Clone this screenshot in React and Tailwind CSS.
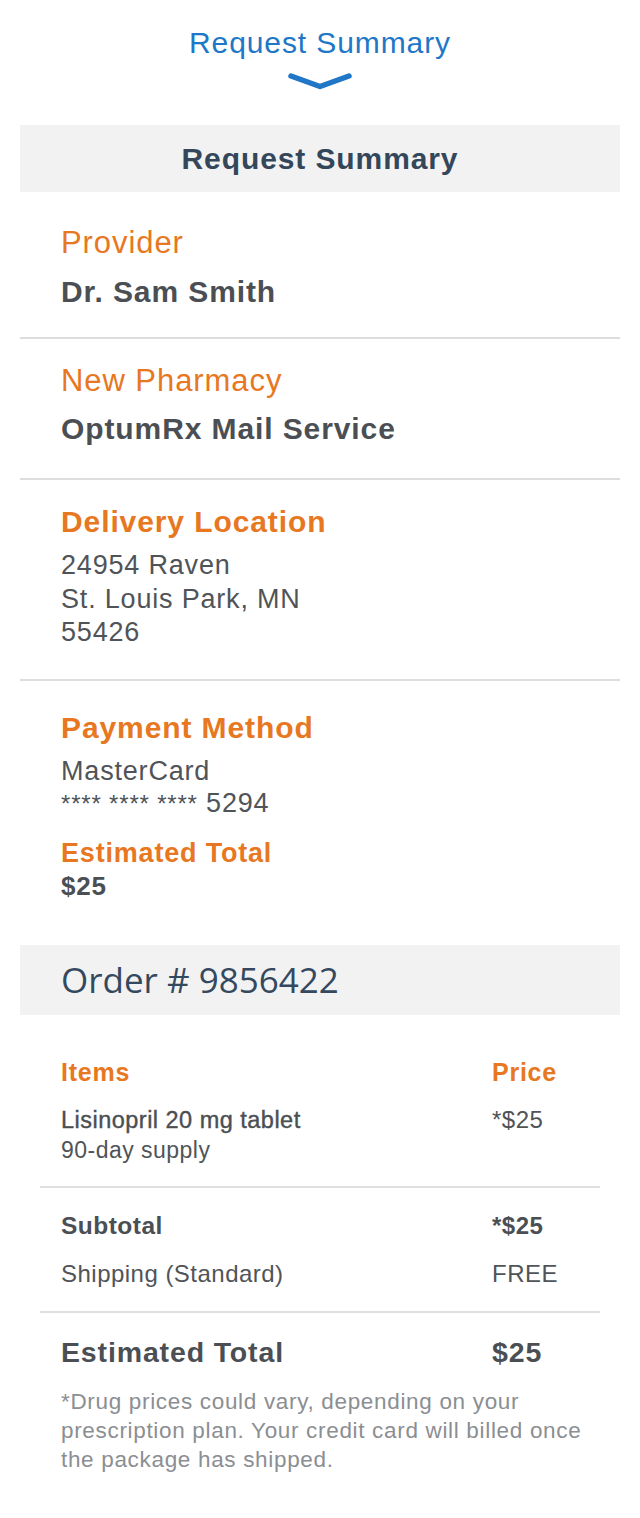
import React from "react";

const font = { fontFamily: '"Liberation Sans", Arial, Helvetica, sans-serif' };

function Label({ children, className = "" }) {
  return <div className={`text-[#e87722] tracking-[0.03em] ${className}`}>{children}</div>;
}

export default function App() {
  return (
    <div className="w-[640px] min-h-[1518px] bg-white" style={font}>
      {/* top toggle */}
      <div className="flex flex-col items-center pt-[25px] pb-[35px]">
        <div className="text-[30px] leading-[36px] tracking-[0.03em] text-[#2077c7]">Request Summary</div>
        <svg className="mt-[11px]" width="66" height="18" viewBox="0 0 66 18" fill="none">
          <polyline points="4,4 33,14.5 62,4" stroke="#2077c7" strokeWidth="5.5" strokeLinecap="round" strokeLinejoin="round" />
        </svg>
      </div>

      {/* summary bar */}
      <div className="mx-[20px] h-[67px] bg-[#f2f2f2] flex items-center justify-center">
        <div className="text-[30px] font-bold tracking-[0.03em] text-[#34475a]">Request Summary</div>
      </div>

      {/* provider */}
      <div className="mx-[20px] pl-[41px] pt-[33px] pb-[27px] border-b-2 border-[#dddddd]">
        <Label className="text-[31px] leading-[36px]">Provider</Label>
        <div className="mt-[13px] text-[30px] leading-[36px] font-bold tracking-[0.03em] text-[#4b4f54]">Dr. Sam Smith</div>
      </div>

      {/* pharmacy */}
      <div className="mx-[20px] pl-[41px] pt-[24px] pb-[31px] border-b-2 border-[#dddddd]">
        <Label className="text-[31px] leading-[36px]">New Pharmacy</Label>
        <div className="mt-[12px] text-[30px] leading-[36px] font-bold tracking-[0.03em] text-[#4b4f54]">OptumRx Mail Service</div>
      </div>

      {/* delivery */}
      <div className="mx-[20px] pl-[41px] pt-[25px] pb-[29px] border-b-2 border-[#dddddd]">
        <Label className="text-[30px] leading-[34px] font-bold">Delivery Location</Label>
        <div className="mt-[10px] text-[27px] leading-[33.5px] tracking-[0.03em] text-[#505458]">
          <div>24954 Raven</div>
          <div>St. Louis Park, MN</div>
          <div>55426</div>
        </div>
      </div>

      {/* payment */}
      <div className="mx-[20px] pl-[41px] pt-[30px] pb-[45px]">
        <Label className="text-[30px] leading-[34px] font-bold">Payment Method</Label>
        <div className="mt-[10.5px] text-[27px] leading-[33px] tracking-[0.03em] text-[#505458]">
          <div>MasterCard</div>
          <div className="-mt-[1px]">
            <span className="text-[24px]">**** **** ****</span> 5294
          </div>
        </div>
        <Label className="mt-[19px] text-[27px] leading-[29px] font-bold">Estimated Total</Label>
        <div className="mt-[3.5px] text-[26px] leading-[28px] font-bold tracking-[0.03em] text-[#4b4f54]">$25</div>
      </div>

      {/* order bar */}
      <div className="mx-[20px] h-[70px] bg-[#f2f2f2] flex items-center pl-[41px]">
        <div className="text-[35px] leading-[40px] text-[#34495e]" style={{ fontFamily: '"Open Sans", "Noto Sans", sans-serif' }}>
          Order # 9856422
        </div>
      </div>

      {/* items */}
      <div className="mx-[40px]">
        <div className="px-[21px] pt-[42px] pb-[21px] border-b-2 border-[#e0e0e0]">
          <div className="flex text-[25px] leading-[30px] font-bold tracking-[0.03em] text-[#e87722]">
            <div className="flex-1">Items</div>
            <div className="w-[87px]">Price</div>
          </div>
          <div className="mt-[18px] flex text-[#4b4f54] tracking-[0.03em]">
            <div className="flex-1">
              <div className="text-[23.5px] leading-[30px] [-webkit-text-stroke:0.4px_#4b4f54]">Lisinopril 20 mg tablet</div>
              <div className="text-[23px] leading-[30px] text-[#505458]">90-day supply</div>
            </div>
            <div className="w-[87px] text-[24px] leading-[30px] text-[#505458]">*$25</div>
          </div>
        </div>

        <div className="px-[21px] pt-[23px] pb-[22px] border-b-2 border-[#e0e0e0] tracking-[0.03em]">
          <div className="flex text-[24.5px] leading-[30px] font-bold text-[#4b4f54]">
            <div className="flex-1">Subtotal</div>
            <div className="w-[87px] text-[24px]">*$25</div>
          </div>
          <div className="mt-[18px] flex text-[24px] leading-[30px] text-[#505458]">
            <div className="flex-1">Shipping (Standard)</div>
            <div className="w-[87px]">FREE</div>
          </div>
        </div>

        <div className="px-[21px] pt-[22px] pb-[43px]">
          <div className="flex text-[28.5px] leading-[34px] font-bold tracking-[0.03em] text-[#4b4f54]">
            <div className="flex-1">Estimated Total</div>
            <div className="w-[87px]">$25</div>
          </div>
          <p className="mt-[18.5px] w-[545px] text-[22.5px] leading-[29px] tracking-[0.03em] text-[#8b8e92]">
            *Drug prices could vary, depending on your prescription plan. Your credit card will billed once the package has shipped.
          </p>
        </div>
      </div>
    </div>
  );
}
